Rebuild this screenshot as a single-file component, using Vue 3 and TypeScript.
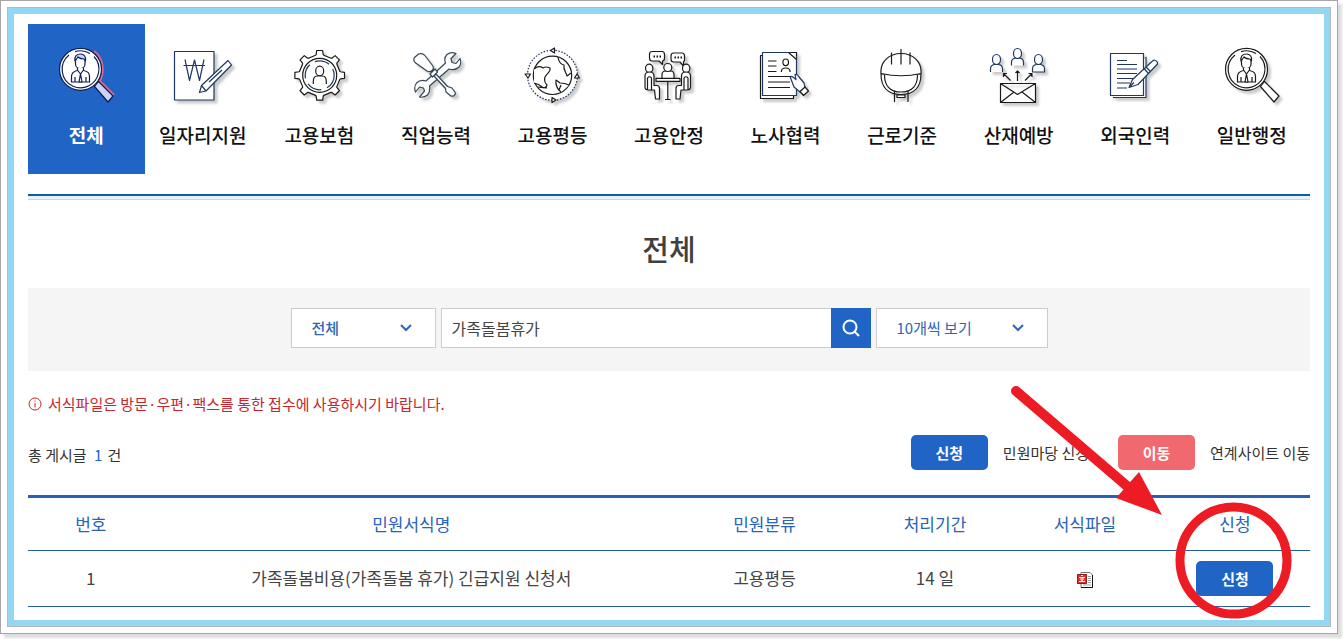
<script setup lang="ts">
import { ref } from 'vue'

interface Category {
  id: string
  label: string
}

interface FormRow {
  no: number
  name: string
  category: string
  period: string
}

const categories: Category[] = [
  { id: 'all', label: '전체' },
  { id: 'jobs', label: '일자리지원' },
  { id: 'insurance', label: '고용보험' },
  { id: 'skills', label: '직업능력' },
  { id: 'equality', label: '고용평등' },
  { id: 'stability', label: '고용안정' },
  { id: 'labor', label: '노사협력' },
  { id: 'standards', label: '근로기준' },
  { id: 'safety', label: '산재예방' },
  { id: 'foreign', label: '외국인력' },
  { id: 'general', label: '일반행정' },
]

const active = ref('all')
const scope = ref('전체')
const pageSize = ref('10개씩 보기')
const keyword = ref('가족돌봄휴가')

const rows: FormRow[] = [
  { no: 1, name: '가족돌봄비용(가족돌봄 휴가) 긴급지원 신청서', category: '고용평등', period: '14 일' },
]

// Outline of an eight-tooth gear around (cx, cy).
function gear(cx: number, cy: number): string {
  const points: string[] = []
  for (let i = 0; i < 8; i++) {
    const a = (i * Math.PI) / 4
    for (const [r, d] of [[20.5, -0.2], [21, -0.17], [25, -0.12], [25, 0.12], [21, 0.17], [20.5, 0.2]]) {
      points.push(`${(cx + r * Math.cos(a + d)).toFixed(2)},${(cy + r * Math.sin(a + d)).toFixed(2)}`)
    }
  }
  return points.join(' ')
}
const gearPoints = gear(38.7, 35.3)
</script>

<template>
  <div class="frame">
    <main class="panel">
      <nav class="categories" aria-label="민원 분류">
        <a
          v-for="c in categories"
          :key="c.id"
          href="#"
          class="category"
          :class="{ active: c.id === active }"
          @click.prevent="active = c.id"
        >
          <svg class="icon" viewBox="0 0 76 70" aria-hidden="true">
            <g v-if="c.id === 'all' || c.id === 'general'">
              <path v-if="c.id === 'all'" class="pink" d="M46 11C55 17 57 31 52 41L66 55" />
              <path :class="{ lilac: c.id === 'all' }" d="M46.500 46.500l4-5L65 56l-5 6z" />
              <circle cx="32.500" cy="29.300" r="21" />
              <path d="M21 15A18.500 18.500 0 0 0 25 46.200A18.500 18.500 0 0 0 50.500 33A18.500 18.500 0 0 0 46 16.500M27 11.600A18.500 18.500 0 0 1 42 13.500" />
              <path d="M27.500 19v5c0 6 9.500 6 9.500 0v-5" />
              <path :class="{ lilac: c.id === 'all' }" d="M27 21c-1-5 2-7 5.500-7s6 3 5 7l-1.500-2c-3 0-5-1-6-2z" />
              <path d="M29.500 28v2.500c-5 1-6 3-6 6V42h18v-5.500c0-4-2-5-6-6V28" />
              <path d="M27 42v-5M38 42v-5M29.500 30l3 4 3-4M32.500 34l-1.500 8h3z" />
            </g>
            <g v-else-if="c.id === 'jobs'" class="navy">
              <path d="M9.500 11.500h39.500v48.500h-39.500z" />
              <path d="M20 19.500l4.500 21L29.500 20l5 20.500L39 19.500M18.500 25.500h21.500" />
              <path d="M34.500 52.500l2-7L63 20.500l3.500 4.500L41 51zM36.500 45.500l4.500 5.500M44 42l13-12" />
            </g>
            <g v-else-if="c.id === 'insurance'">
              <polygon :points="gearPoints" />
              <circle cx="38.700" cy="35.300" r="17" />
              <circle class="navy" cx="38.700" cy="35.300" r="14.500" stroke-dasharray="15 6" />
              <ellipse cx="38.700" cy="31" rx="4" ry="4.800" />
              <path d="M32.300 44v-2.500q0-5.500 4-5.500h5q4 0 4 5.500V44" />
            </g>
            <g v-else-if="c.id === 'skills'" class="steel">
              <path d="M49 14.500q4-3 9-1l-5 5 1 4 4 1 4-5q2 5-1 8.500-4 4-10 2L31.500 46q1 6-2 9-4 3-8 2l5-6-1-3-4-1-4 5q-2-5 1-9 4-4 9.500-2L47.500 23q-2-5 1.500-8.500z" />
              <path d="M16.500 17.500l4-3.500q3-1 6 1l8 10.500q2 3-.500 5t-5 .500L17 22.500q-2-2.500-.500-5zM32 34l5-5 2.500 3-5 5zM38 34l11.500 12.500 4.500 1.500 3.500 5q-1 4-4.500 3l-5-4-.500-3.500L36 36z" />
            </g>
            <g v-else-if="c.id === 'equality'">
              <circle class="navy" cx="38.500" cy="35.300" r="25" stroke-dasharray="1.500 1.500" />
              <circle cx="38.500" cy="35.300" r="19.200" />
              <path d="M20 29q5-4 9-1 3-2 7 0c1 4-4 6-5 9s-1 5 2 8q-1 4-5 2-3-3-8-4M24 47q5 1 9 1M44 17q1 7 6 8c-1 5 2 7 3 11l4-3M47 52c-3-2-6-7-5-12l4 3q5 0 9 2M47 45l-2 5" />
              <path d="M36.500 10.500l4-2.500v5zM11 34h5.500l-2.500 4zM60.500 38h5l-2.500-4zM38 57.500v5l4-2.500z" />
            </g>
            <g v-else-if="c.id === 'stability'">
              <path d="M21 11.500h10q2.500 0 2.500 3v3.500q0 3-2 3v3.500L28 21h-7q-2.500 0-2.500-3v-3.500q0-3 2.500-3zM42.500 13h8.500q2.500 0 2.500 3v3q0 2.500-1 2.500V26L49 22h-6.500q-2.500 0-2.500-3v-3q0-3 2.500-3z" />
              <path class="dots" d="M22.500 16.500h8M43.500 17.500h8" />
              <path d="M31 38v-3q0-4 3.500-4h5q3.500 0 3.500 4v3" />
              <circle cx="36.800" cy="27.500" r="4" />
              <path d="M25 38.300h24v3H25zM36.800 41.500v18M34 59.500h5.500" />
              <ellipse cx="18.200" cy="28.300" rx="3.700" ry="4.200" />
              <ellipse cx="55.200" cy="28.300" rx="3.700" ry="4.200" />
              <path d="M14 36q0-4 4.500-4t4.500 4v9.500h3q2.500 0 2.500 3V59h-4l-1-9h-6q-3.500 0-3.500-3zM16.500 50V38q2-2.500 4 0v12" />
              <path d="M59.500 36q0-4-4.500-4t-4.500 4v9.500h-3q-2.500 0-2.500 3V59h4l1-9h6q3.500 0 3.500-3zM57 50V38q-2-2.500-4 0v12" />
            </g>
            <g v-else-if="c.id === 'labor'">
              <path d="M12.500 15.500h33v43h-33z" />
              <path class="navy" d="M14.500 12.500h34v43h-34z" />
              <path d="M40.500 12.500l8 7M43 12.500h5.500v4M20 21h8.500M20 26h8.500M20 31.500h8.500M20 36.500h22M20 42h22M20 47.500h22" />
              <ellipse cx="37.700" cy="22.300" rx="2.800" ry="3.300" />
              <path d="M33.300 32q0-4 4.400-4t4.400 4" />
              <path class="navy" d="M42 36.500q2-1 6 3l-1-5q2-1 4 2.500l5 6 1 5-5 4-6-5z" />
              <path d="M57 47l3.500 4-5 4.500-3.500-4z" />
            </g>
            <g v-else-if="c.id === 'standards'">
              <path d="M17 34c0 13 7 20.500 20 20.500S57 47 57 34z" />
              <path d="M20.500 35c0 10 5 17 16.500 17s16.500-7 16.500-17" />
              <path d="M17 33.500C16 22 25 13.500 37 13.500S58 22 57 33.500Q37 38 17 33.500z" />
              <path d="M27.500 12.500v12M37 9v15.500M46 12.500v12M30.500 51v11M44 51v11M33 55h8v2.500h-8z" />
            </g>
            <g v-else-if="c.id === 'safety'">
              <g class="navy">
                <path d="M9.500 32v-3q0-4 4-4.500h4q4 .500 4 4.500v3M30.500 25.500v-3q0-4 4-4.500h4q4 .500 4 4.500v3M51.500 32v-3q0-4 4-4.500h4q4 .500 4 4.500v3z" />
                <ellipse cx="15.500" cy="19.500" rx="4" ry="5" />
                <ellipse cx="36.500" cy="13.500" rx="4" ry="5" />
                <ellipse cx="57.500" cy="19.500" rx="4" ry="5" />
              </g>
              <path d="M29.500 40.500l-7-7m0 3.500v-3.500H26M36.500 41V31m-2 2l2-2 2 2M44 40.500l7-7m-3.500 0H51V37" />
              <path d="M19.500 43.500h35v19h-35zM19.500 43.500l17 11 18-11M19.500 62.500l13.500-10.500M54.500 62.500L41 52" />
            </g>
            <g v-else class="navy">
              <path d="M16 57.500h33V17" />
              <path d="M13.500 13.500h33v42h-33z" />
              <path d="M20 20.500h10M20 24.500h20M20 29h20M20 33.500h20M20 38.500h17M20 43h13M20 48h10" />
              <path d="M32 47.500l3.500-8L55 21.500l2-1.500q4 1 3.500 4L41 44.500zM32 47.500l5-5M47 28.500l4 4.500M49 27l4 4" />
            </g>
          </svg>
          <span class="category-label">{{ c.label }}</span>
        </a>
      </nav>

      <h1>전체</h1>

      <form class="search" @submit.prevent>
        <div class="picker scope">
          <select v-model="scope" aria-label="검색 분류">
            <option>전체</option>
          </select>
          <svg viewBox="0 0 12 8" aria-hidden="true"><path d="M1 1l5 5 5-5" /></svg>
        </div>
        <div class="keyword">
          <input v-model="keyword" type="text" aria-label="검색어" />
          <button type="submit" aria-label="검색">
            <svg viewBox="0 0 18 18" aria-hidden="true"><circle cx="8" cy="8" r="6.500" /><path d="M12.500 12.500l4.500 4.500" /></svg>
          </button>
        </div>
        <div class="picker size">
          <select v-model="pageSize" aria-label="목록 개수">
            <option>10개씩 보기</option>
          </select>
          <svg viewBox="0 0 12 8" aria-hidden="true"><path d="M1 1l5 5 5-5" /></svg>
        </div>
      </form>

      <p class="notice">
        <svg viewBox="0 0 14 14" aria-hidden="true"><circle cx="7" cy="7" r="6" /><path d="M7 6v4.500M7 3.500v1.200" /></svg>
        서식파일은 방문·우편·팩스를 통한 접수에 사용하시기 바랍니다.
      </p>

      <div class="summary">
        <p class="total">총 게시글 <b>1</b> 건</p>
        <div class="legend">
          <button type="button" class="btn">신청</button>
          <span>민원마당 신청</span>
          <button type="button" class="btn move">이동</button>
          <span>연계사이트 이동</span>
        </div>
      </div>

      <table>
        <colgroup>
          <col class="c-no" /><col class="c-name" /><col class="c-cat" /><col class="c-term" /><col class="c-file" /><col class="c-apply" />
        </colgroup>
        <thead>
          <tr>
            <th scope="col">번호</th>
            <th scope="col">민원서식명</th>
            <th scope="col">민원분류</th>
            <th scope="col">처리기간</th>
            <th scope="col">서식파일</th>
            <th scope="col">신청</th>
          </tr>
        </thead>
        <tbody>
          <tr v-for="row in rows" :key="row.no">
            <td>{{ row.no }}</td>
            <td>{{ row.name }}</td>
            <td>{{ row.category }}</td>
            <td>{{ row.period }}</td>
            <td>
              <a href="#" class="file" aria-label="서식파일 내려받기">
                <svg viewBox="0 0 16 16" aria-hidden="true">
                  <path d="M4 .500h9l2.500 2.500v12.500H4z" fill="#fff" stroke="#777" />
                  <path d="M4 15.500h11.500V3" fill="none" stroke="#111" />
                  <path d="M11 4.500h3M11 6.500h3M11 8.500h3M11 10.500h3M6 13h8" stroke="#999" />
                  <path d="M.500 2.500h9v9h-9z" fill="#d8322a" stroke="#8e1d18" />
                  <path d="M4 3.500h2M2 5.500h6M2 9.500h6M5 8v1.500" stroke="#fff" />
                  <circle cx="5" cy="7" r="1.200" fill="none" stroke="#fff" />
                </svg>
              </a>
            </td>
            <td><button type="button" class="btn">신청</button></td>
          </tr>
        </tbody>
      </table>

      <svg class="pointer" viewBox="0 0 290 240" aria-hidden="true">
        <path d="M6 11L124 112" stroke="#ed1c24" stroke-width="10" stroke-linecap="round" />
        <path d="M152 135L129 92 106 118z" fill="#ed1c24" />
        <circle cx="223.500" cy="180.500" r="53.500" fill="none" stroke="#ed1c24" stroke-width="9" />
      </svg>
    </main>
  </div>
</template>

<style>
body {
  margin: 0;
  background: #fff;
}
</style>

<style scoped>
.frame {
  margin: 0 5px 5px 0;
  padding: 6px;
  border: 1px solid #a6a6a6;
  box-shadow: 4px 4px 3px #dcdcdc;
  font-family: "Noto Sans CJK KR", "Noto Sans", sans-serif;
  font-size: 15px;
  line-height: 24px;
  color: #333;
}
.panel {
  position: relative;
  padding: 10px 14px 13px;
  border: 6px solid #93d7f4;
  outline: 1px solid #b4b8ba;
  margin: 1px;
}
.categories {
  display: grid;
  grid-template-columns: repeat(11, 1fr);
  padding-bottom: 20px;
  border-bottom: 2px solid #0d5ea4;
  box-shadow: 0 3px #e8f2fa, 0 4px #c9d4e8;
}
.category {
  display: flex;
  flex-direction: column;
  align-items: center;
  gap: 11px;
  height: 134px;
  padding-top: 16px;
  color: #111;
  text-decoration: none;
}
.category.active {
  background: #2064c6;
  color: #fff;
}
.category-label {
  font-size: 19px;
  font-weight: 500;
  line-height: 28px;
}
.active .category-label {
  font-weight: 700;
}
.icon {
  width: 76px;
  height: 70px;
  fill: #fff;
  stroke: #1a1a1a;
  stroke-width: 1.2;
  stroke-linejoin: round;
  filter: drop-shadow(3px 3px 1px #ccc);
}
.active .icon {
  stroke: #0d1f4f;
  filter: none;
}
.icon .navy {
  stroke: #1f3763;
}
.icon .steel {
  stroke: #33475a;
}
.icon .pink {
  fill: none;
  stroke: #d9688f;
  stroke-width: 2;
}
.icon .lilac {
  fill: #cfd3fa;
}
.icon .dots {
  stroke-width: 2;
  stroke-dasharray: 1.5 1.5;
}
h1 {
  margin: 31px 0 19px;
  font-size: 29px;
  font-weight: 500;
  line-height: 42px;
  text-align: center;
  color: #404040;
}
.search {
  display: flex;
  justify-content: center;
  gap: 5px;
  padding: 20px 0 23px;
  background: #f5f5f5;
}
.picker {
  display: grid;
  grid-template-columns: 1fr 32px;
  align-items: center;
}
.scope {
  width: 145px;
}
.size {
  width: 172px;
}
.picker select {
  grid-area: 1 / 1 / 2 / 3;
  width: 100%;
  height: 40px;
  padding: 0 20px;
  border: 1px solid #ccc;
  border-radius: 0;
  appearance: none;
  background: #fff;
  font: inherit;
  font-weight: 500;
  color: #2f66b8;
}
.size select {
  font-weight: 400;
}
.picker svg {
  grid-area: 1 / 2;
  width: 12px;
  height: 8px;
  margin-left: -4px;
  fill: none;
  stroke: #2f66b8;
  stroke-width: 2;
  pointer-events: none;
}
.keyword {
  display: flex;
  width: 430px;
}
.keyword input {
  flex: 1;
  min-width: 0;
  height: 40px;
  box-sizing: border-box;
  padding: 0 10px;
  border: 1px solid #ccc;
  border-right: 0;
  background: #fff;
  font: inherit;
  font-size: 16px;
  color: #444;
}
.keyword button {
  display: grid;
  place-items: center;
  width: 40px;
  height: 40px;
  padding: 0;
  border: 0;
  background: #2064c6;
}
.keyword button svg {
  width: 18px;
  height: 18px;
  fill: none;
  stroke: #fff;
  stroke-width: 2;
}
.notice {
  display: flex;
  align-items: center;
  gap: 6px;
  margin: 21px 0 19px;
  color: #c9252d;
}
.notice svg {
  width: 14px;
  height: 14px;
  fill: none;
  stroke: #c9252d;
  stroke-width: 1;
}
.summary {
  display: flex;
  justify-content: space-between;
  align-items: center;
  margin-bottom: 25px;
}
.total {
  margin: 0;
  padding-top: 4px;
}
.total b {
  margin: 0 2px 0 4px;
  font-weight: 400;
  color: #2064c6;
}
.legend {
  display: flex;
  align-items: center;
  gap: 15px;
}
.legend .move {
  margin-left: 14px;
}
.btn {
  width: 77px;
  height: 35px;
  padding: 0;
  border: 0;
  border-radius: 5px;
  background: #2064c6;
  font: inherit;
  font-weight: 700;
  color: #fff;
}
.btn.move {
  background: #f1686f;
}
table {
  width: 100%;
  border-collapse: separate;
  border-spacing: 0;
  border-top: 3px solid #2860b4;
  table-layout: fixed;
  font-size: 17px;
  text-align: center;
  color: #444;
}
.c-no {
  width: 9.8%;
}
.c-name {
  width: 40.2%;
}
.c-cat {
  width: 14.9%;
}
.c-term {
  width: 11.7%;
}
.c-file {
  width: 11.7%;
}
.c-apply {
  width: 11.7%;
}
th,
td {
  padding: 0;
  border-bottom: 1px solid #28609f;
}
th {
  height: 52px;
  font-weight: 400;
  color: #2863b8;
}
td {
  height: 53px;
  padding-bottom: 2px;
}
td .btn {
  display: block;
  margin: 2px auto 0;
  font-size: 15px;
}
.file {
  display: inline-block;
  vertical-align: middle;
}
.file svg {
  display: block;
  width: 16px;
  height: 16px;
}
.pointer {
  position: absolute;
  right: 24px;
  bottom: 0;
  width: 290px;
  height: 240px;
  fill: none;
  pointer-events: none;
}
</style>
